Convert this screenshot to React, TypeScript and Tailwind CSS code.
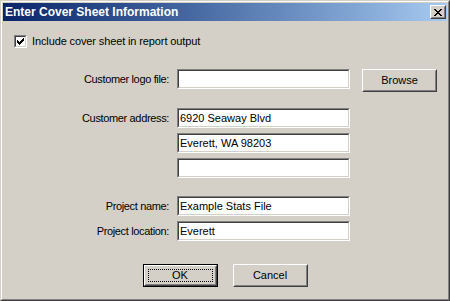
import React from 'react';

// classic win2k-style dialog
const font = { fontFamily: '"Liberation Sans", Arial, sans-serif' };

const Field = ({ value = '', className = '' }: { value?: string; className?: string }) => (
  <div className={`h-[20px] border border-t-[#808080] border-l-[#808080] border-b-white border-r-white ${className}`}>
    <div className="h-full border border-t-[#404040] border-l-[#404040] border-b-[#d4d0c8] border-r-[#d4d0c8] bg-white pl-px flex items-center text-[11px] text-black leading-none whitespace-nowrap overflow-hidden">
      {value}
    </div>
  </div>
);

const Button = ({ label, isDefault = false }: { label: string; isDefault?: boolean }) => {
  const bevel = (
    <div className="h-full border border-t-white border-l-white border-b-[#404040] border-r-[#404040]">
      <div className="h-full border border-t-[#d4d0c8] border-l-[#d4d0c8] border-b-[#808080] border-r-[#808080] flex items-center justify-center p-[2px]">
        {isDefault ? (
          <div className="w-full h-full border border-dotted border-black flex items-center justify-center text-[11px] leading-none">
            {label}
          </div>
        ) : (
          <span className="text-[11px] leading-none">{label}</span>
        )}
      </div>
    </div>
  );
  if (isDefault) {
    return <div className="w-[75px] h-[23px] border border-black">{bevel}</div>;
  }
  return <div className="w-[75px] h-[23px]">{bevel}</div>;
};

const Label = ({ text }: { text: string }) => (
  <div className="w-[167px] h-[20px] flex items-center justify-end pr-px text-[11px] leading-none tracking-[-0.35px] text-black">
    {text}
  </div>
);

export default function App() {
  return (
    <div
      className="w-[450px] h-[301px] border border-t-[#d4d0c8] border-l-[#d4d0c8] border-b-[#404040] border-r-[#404040] select-none"
      style={font}
    >
      <div className="h-full border border-t-white border-l-white border-b-[#808080] border-r-[#808080] bg-[#d4d0c8] p-px flex flex-col text-black">
        {/* title bar */}
        <div className="h-[18px] bg-linear-to-r from-[#0a246a] to-[#a6caf0] flex items-center justify-between pl-[2px] pr-[1px]">
          <span className="text-white font-bold text-[12px] leading-none">Enter Cover Sheet Information</span>
          <div className="w-[16px] h-[14px] border border-t-white border-l-white border-b-[#404040] border-r-[#404040]">
            <div className="h-full border border-t-[#d4d0c8] border-l-[#d4d0c8] border-b-[#808080] border-r-[#808080] bg-[#d4d0c8] flex items-center justify-center">
              <svg width="8" height="7" viewBox="0 0 8 7" shapeRendering="crispEdges">
                <path d="M0 0h2v1H0zM6 0h2v1H6zM1 1h2v1H1zM5 1h2v1H5zM2 2h4v1H2zM3 3h2v1H3zM2 4h4v1H2zM1 5h2v1H1zM5 5h2v1H5zM0 6h2v1H0zM6 6h2v1H6z" fill="#000" />
              </svg>
            </div>
          </div>
        </div>

        {/* checkbox */}
        <div className="mt-[14px] ml-[11px] flex items-center gap-[5px]">
          <div className="w-[13px] h-[13px] border border-t-[#808080] border-l-[#808080] border-b-white border-r-white">
            <div className="h-full border border-t-[#404040] border-l-[#404040] border-b-[#d4d0c8] border-r-[#d4d0c8] bg-white flex items-center justify-center">
              <svg width="7" height="7" viewBox="0 0 7 7" shapeRendering="crispEdges">
                <path d="M6 0h1v3H6zM5 1h1v3H5zM4 2h1v3H4zM3 3h1v3H3zM2 4h1v3H2zM1 3h1v3H1zM0 2h1v3H0z" fill="#000" />
              </svg>
            </div>
          </div>
          <span className="text-[11px] leading-none tracking-[-0.12px]">Include cover sheet in report output</span>
        </div>

        {/* logo */}
        <div className="mt-[21px] flex items-start">
          <Label text="Customer logo file:" />
          <Field className="ml-[7px] w-[173px]" />
          <div className="ml-[12px]">
            <Button label="Browse" />
          </div>
        </div>

        {/* address */}
        <div className="mt-[16px] flex items-start">
          <Label text="Customer address:" />
          <div className="ml-[7px] flex flex-col gap-[5px]">
            <Field className="w-[173px]" value="6920 Seaway Blvd" />
            <Field className="w-[173px]" value="Everett, WA 98203" />
            <Field className="w-[173px]" />
          </div>
        </div>

        {/* project */}
        <div className="mt-[18px] flex items-start">
          <Label text="Project name:" />
          <Field className="ml-[7px] w-[173px]" value="Example Stats File" />
        </div>
        <div className="mt-[5px] flex items-start">
          <Label text="Project location:" />
          <Field className="ml-[7px] w-[173px]" value="Everett" />
        </div>

        {/* actions */}
        <div className="mt-[23px] flex justify-center gap-[15px]">
          <Button label="OK" isDefault />
          <Button label="Cancel" />
        </div>
      </div>
    </div>
  );
}
